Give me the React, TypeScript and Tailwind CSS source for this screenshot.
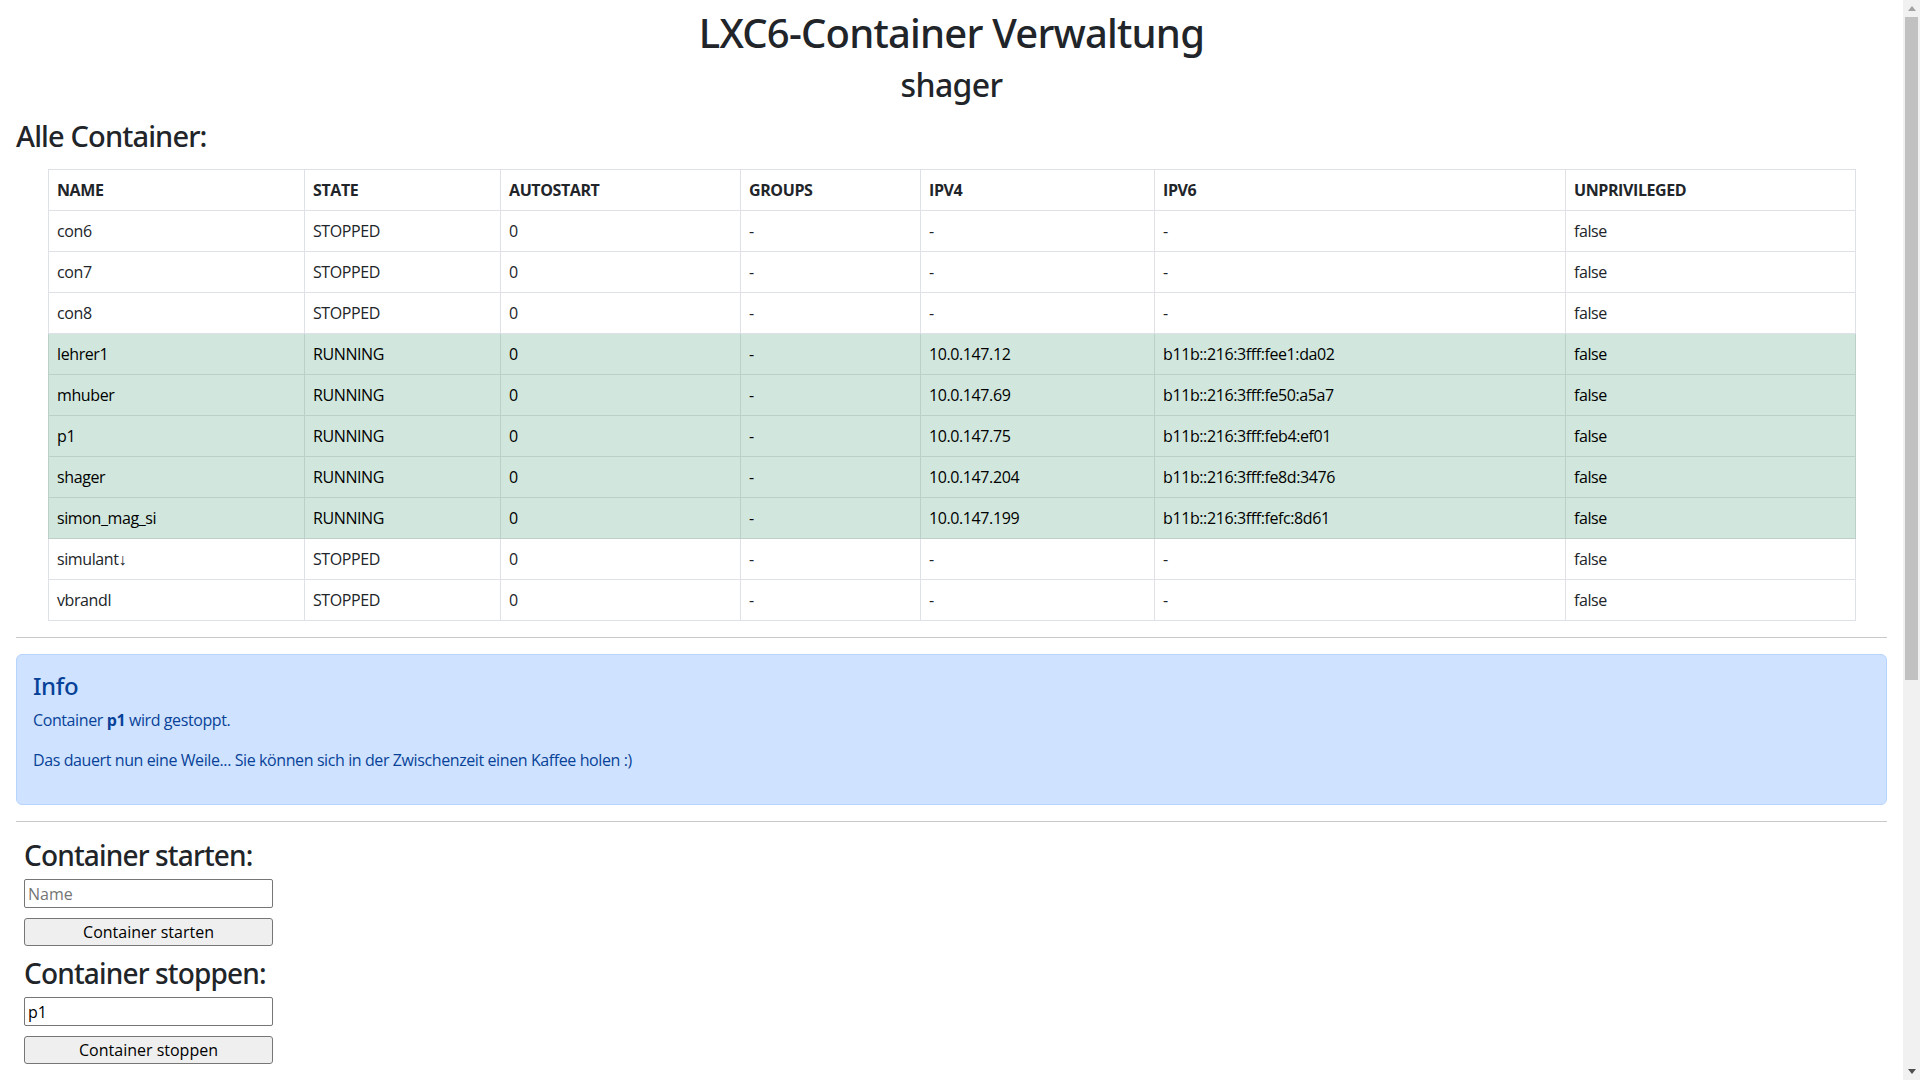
import React from 'react'

type ContainerRow = {
  name: string;
  state: 'RUNNING' | 'STOPPED';
  autostart: string;
  groups: string;
  ipv4: string;
  ipv6: string;
  unprivileged: string;
};

const containers: ContainerRow[] = [
  { name: 'con6', state: 'STOPPED', autostart: '0', groups: '-', ipv4: '-', ipv6: '-', unprivileged: 'false' },
  { name: 'con7', state: 'STOPPED', autostart: '0', groups: '-', ipv4: '-', ipv6: '-', unprivileged: 'false' },
  { name: 'con8', state: 'STOPPED', autostart: '0', groups: '-', ipv4: '-', ipv6: '-', unprivileged: 'false' },
  { name: 'lehrer1', state: 'RUNNING', autostart: '0', groups: '-', ipv4: '10.0.147.12', ipv6: 'b11b::216:3fff:fee1:da02', unprivileged: 'false' },
  { name: 'mhuber', state: 'RUNNING', autostart: '0', groups: '-', ipv4: '10.0.147.69', ipv6: 'b11b::216:3fff:fe50:a5a7', unprivileged: 'false' },
  { name: 'p1', state: 'RUNNING', autostart: '0', groups: '-', ipv4: '10.0.147.75', ipv6: 'b11b::216:3fff:feb4:ef01', unprivileged: 'false' },
  { name: 'shager', state: 'RUNNING', autostart: '0', groups: '-', ipv4: '10.0.147.204', ipv6: 'b11b::216:3fff:fe8d:3476', unprivileged: 'false' },
  { name: 'simon_mag_si', state: 'RUNNING', autostart: '0', groups: '-', ipv4: '10.0.147.199', ipv6: 'b11b::216:3fff:fefc:8d61', unprivileged: 'false' },
  { name: 'simulant↓', state: 'STOPPED', autostart: '0', groups: '-', ipv4: '-', ipv6: '-', unprivileged: 'false' },
  { name: 'vbrandl', state: 'STOPPED', autostart: '0', groups: '-', ipv4: '-', ipv6: '-', unprivileged: 'false' },
]

const columns = ['NAME', 'STATE', 'AUTOSTART', 'GROUPS', 'IPV4', 'IPV6', 'UNPRIVILEGED']

// headings: Noto Sans has a real 500 weight, Open Sans falls back to 400
const heading = "font-['Noto_Sans','Open_Sans',sans-serif] font-medium"

function ContainerTable() {
  return (
    <table className="w-full table-fixed border-collapse text-[16px] leading-6 tracking-[-0.025em]">
      <colgroup>
        <col className="w-[256px]" />
        <col className="w-[196px]" />
        <col className="w-[240px]" />
        <col className="w-[180px]" />
        <col className="w-[234px]" />
        <col className="w-[411px]" />
        <col className="w-[290px]" />
      </colgroup>
      <thead>
        <tr>
          {columns.map((c) => (
            <th key={c} className="border border-[#dee2e6] p-2 text-left font-bold">
              {c}
            </th>
          ))}
        </tr>
      </thead>
      <tbody>
        {containers.map((row) => {
          const cell =
            row.state === 'RUNNING'
              ? 'border border-[#bcd0c7] bg-[#d1e7dd] p-2 text-black'
              : 'border border-[#dee2e6] p-2'
          return (
            <tr key={row.name}>
              <td className={cell}>{row.name}</td>
              <td className={cell}>{row.state}</td>
              <td className={cell}>{row.autostart}</td>
              <td className={cell}>{row.groups}</td>
              <td className={cell}>{row.ipv4}</td>
              <td className={cell}>{row.ipv6}</td>
              <td className={cell}>{row.unprivileged}</td>
            </tr>
          )
        })}
      </tbody>
    </table>
  )
}

function ActionForm({ title, button, value, placeholder }: { title: string; button: string; value?: string; placeholder?: string }) {
  return (
    <div className="mb-[10px]">
      <h3 className={`mb-[7px] text-[28px] leading-[34px] tracking-[-0.03em] ${heading}`}>{title}</h3>
      <input
        type="text"
        defaultValue={value}
        placeholder={placeholder}
        className="block h-[29px] w-[249px] rounded-[2px] border border-[#767676] px-[3px] text-[16px] text-black placeholder:text-[#757575] outline-none"
      />
      <button className="mt-[10px] block h-[28px] w-[249px] rounded-[3px] border border-[#767676] bg-[#efefef] text-[16px] text-black">
        {button}
      </button>
    </div>
  )
}

function Scrollbar() {
  return (
    <div className="flex w-[17px] shrink-0 flex-col items-center bg-[#f1f1f1]">
      <div className="flex h-[17px] items-center justify-center">
        <svg width="8" height="5" viewBox="0 0 8 5">
          <path d="M0 5 L4 0 L8 5 Z" fill="#a3a3a3" />
        </svg>
      </div>
      <div className="h-[663px] w-[13px] bg-[#c1c1c1]" />
      <div className="flex-1" />
      <div className="flex h-[17px] items-center justify-center">
        <svg width="8" height="5" viewBox="0 0 8 5">
          <path d="M0 0 L8 0 L4 5 Z" fill="#505050" />
        </svg>
      </div>
    </div>
  )
}

export default function App() {
  return (
    <div className="flex h-screen overflow-hidden bg-white font-['Open_Sans',sans-serif] text-[#212529]">
      <main className="min-w-0 flex-1 px-4 pt-[9px]">
        <h1 className={`mb-[9px] text-center text-[40px] leading-[48px] tracking-[-0.02em] ${heading}`}>LXC6-Container Verwaltung</h1>
        <h2 className={`mb-[14px] text-center text-[32px] leading-[38px] tracking-[-0.02em] ${heading}`}>shager</h2>
        <h3 className={`mb-4 text-[29px] leading-[35px] tracking-[-0.03em] ${heading}`}>Alle Container:</h3>

        <div className="px-8">
          <ContainerTable />
        </div>

        <hr className="my-4 h-px border-0 bg-[#c8c9ca]" />

        <div className="mb-4 rounded-md border border-[#b6d4fe] bg-[#cfe2ff] p-4 text-[16px] leading-6 tracking-[-0.025em] text-[#084298]">
          <h4 className={`mb-2 text-[24px] leading-[29px] ${heading}`}>Info</h4>
          <p className="mb-4">
            Container <b>p1</b> wird gestoppt.
          </p>
          <p className="mb-4">Das dauert nun eine Weile... Sie können sich in der Zwischenzeit einen Kaffee holen :)</p>
        </div>

        <hr className="my-4 h-px border-0 bg-[#c8c9ca]" />

        <div className="px-2">
          <ActionForm title="Container starten:" button="Container starten" placeholder="Name" />
          <ActionForm title="Container stoppen:" button="Container stoppen" value="p1" />
          <ActionForm title="Snapshot erstellen:" button="Snapshot erstellen" placeholder="Name" />
        </div>
      </main>
      <Scrollbar />
    </div>
  )
}
